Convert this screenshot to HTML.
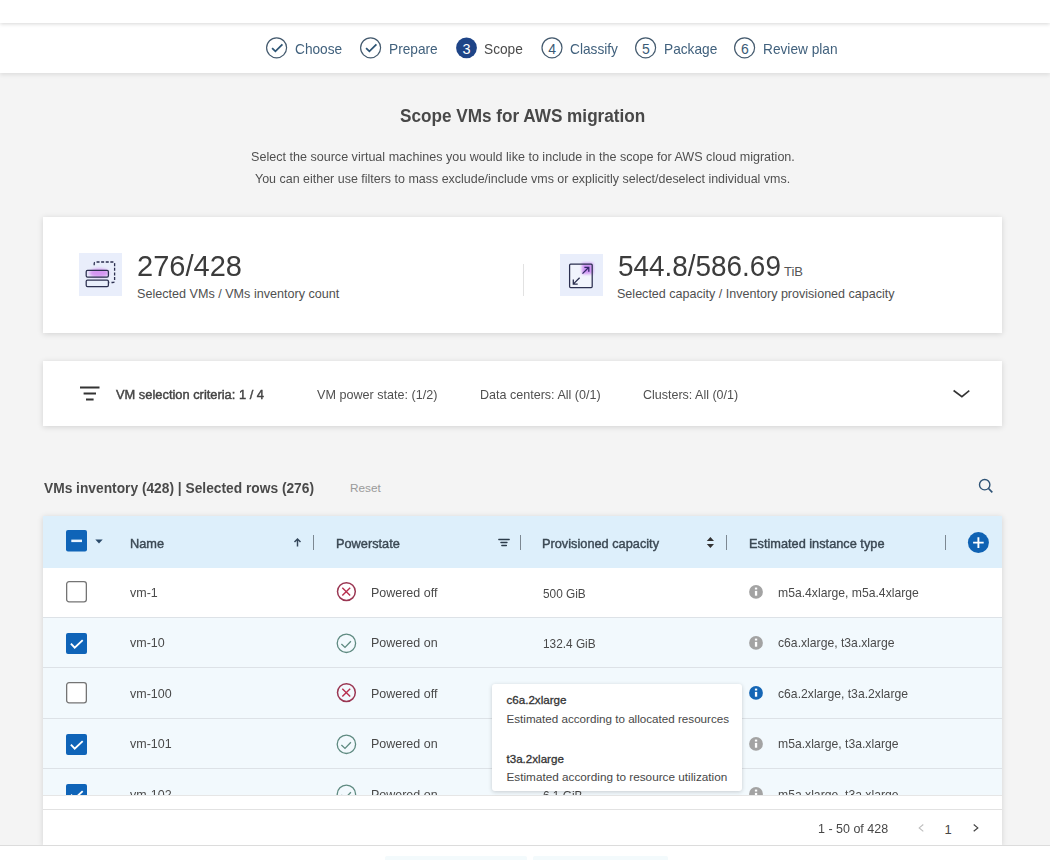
<!DOCTYPE html>
<html><head><meta charset="utf-8">
<style>
*{box-sizing:border-box;margin:0;padding:0}
html,body{width:1050px;height:860px;overflow:hidden;background:#f4f4f4;font-family:"Liberation Sans",sans-serif;color:#333}
.t{position:absolute;white-space:nowrap;line-height:1}
svg{position:absolute;overflow:visible}
#topbar{position:absolute;left:0;top:0;width:1050px;height:23px;background:#fff;box-shadow:0 1px 4px rgba(0,0,0,.16);z-index:2}
#stepper{position:absolute;left:0;top:23px;width:1050px;height:50px;background:#fff;box-shadow:0 2px 4px rgba(0,0,0,.09)}
.step{color:#41617d;font-size:14.2px;top:42.2px;transform:scaleX(.965);transform-origin:0 0}
.card{position:absolute;left:43px;width:959px;background:#fff;box-shadow:0 1px 6px rgba(0,0,0,.14)}
.sb{-webkit-text-stroke:0.3px currentColor}
.hd{font-size:12.9px;color:#3b4853;top:537.6px;-webkit-text-stroke:0.4px #3b4853;transform:scaleX(.99);transform-origin:0 0}
.row{position:absolute;left:43px;width:959px;height:50px;border-bottom:1px solid #dde3e8}
.cell{font-size:13px;color:#4a4a4a;top:17.6px;transform:scaleX(.96);transform-origin:0 0}
.cap{font-size:12.4px;top:19.7px;transform:scaleX(.955)}
.inst{font-size:12.7px;top:18.9px;transform:scaleX(.96)}
</style></head><body>
<div id="topbar"></div>
<div id="stepper"></div>

<!-- Stepper -->
<svg style="left:266px;top:37px" width="22" height="22" viewBox="0 0 22 22"><circle cx="10.6" cy="10.8" r="10" fill="none" stroke="#445a6e" stroke-width="1.2"/><path d="M6.1 11.2 L9.4 14.3 L16.4 7.4" fill="none" stroke="#2e5575" stroke-width="1.8"/></svg>
<div class="t step" style="left:295px">Choose</div>
<svg style="left:360px;top:37px" width="22" height="22" viewBox="0 0 22 22"><circle cx="10.6" cy="10.8" r="10" fill="none" stroke="#445a6e" stroke-width="1.2"/><path d="M6.1 11.2 L9.4 14.3 L16.4 7.4" fill="none" stroke="#2e5575" stroke-width="1.8"/></svg>
<div class="t step" style="left:389px">Prepare</div>
<svg style="left:456px;top:37px" width="22" height="22" viewBox="0 0 22 22"><circle cx="10.5" cy="10.8" r="10.4" fill="#1e4487"/></svg>
<div class="t" style="left:462.6px;top:41.6px;font-size:14.5px;color:#fff">3</div>
<div class="t step" style="left:484px;color:#4a4a4a">Scope</div>
<svg style="left:541px;top:37px" width="22" height="22" viewBox="0 0 22 22"><circle cx="11" cy="10.8" r="10" fill="none" stroke="#445a6e" stroke-width="1.2"/></svg>
<div class="t" style="left:548.2px;top:42.2px;font-size:14px;color:#3a5a75">4</div>
<div class="t step" style="left:570px">Classify</div>
<svg style="left:635px;top:37px" width="22" height="22" viewBox="0 0 22 22"><circle cx="10.6" cy="10.8" r="10" fill="none" stroke="#445a6e" stroke-width="1.2"/></svg>
<div class="t" style="left:642px;top:42.2px;font-size:14px;color:#3a5a75">5</div>
<div class="t step" style="left:664px">Package</div>
<svg style="left:734px;top:37px" width="22" height="22" viewBox="0 0 22 22"><circle cx="10.6" cy="10.8" r="10" fill="none" stroke="#445a6e" stroke-width="1.2"/></svg>
<div class="t" style="left:741px;top:42.2px;font-size:14px;color:#3a5a75">6</div>
<div class="t step" style="left:763px">Review plan</div>

<!-- Title -->
<div class="t" style="left:399.5px;top:107.3px;font-size:18px;font-weight:700;color:#484848;transform:scaleX(.953);transform-origin:0 0">Scope VMs for AWS migration</div>
<div class="t" style="left:250.5px;top:150.2px;font-size:13px;color:#505050;transform:scaleX(.967);transform-origin:0 0">Select the source virtual machines you would like to include in the scope for AWS cloud migration.</div>
<div class="t" style="left:254.5px;top:172px;font-size:13px;color:#505050;transform:scaleX(.959);transform-origin:0 0">You can either use filters to mass exclude/include vms or explicitly select/deselect individual vms.</div>

<!-- Summary card -->
<div class="card" style="top:217px;height:116px"></div>
<div style="position:absolute;left:79px;top:253px;width:43px;height:43px;background:#e9eefb"></div>
<svg style="left:79px;top:253px" width="43" height="43" viewBox="0 0 43 43">
 <defs><filter id="bl" x="-50%" y="-50%" width="200%" height="200%"><feGaussianBlur stdDeviation="1.6"/></filter></defs>
 <ellipse cx="20" cy="20" rx="10" ry="4.2" fill="#d595f2" filter="url(#bl)"/>
 <path d="M15.2 12.2 V10.6 Q15.2 9 16.8 9 H34 Q35.6 9 35.6 10.6 V27.9 Q35.6 29.5 34 29.5 H30.6" fill="none" stroke="#2b2f4f" stroke-width="1.3" stroke-dasharray="3 1.6"/>
 <rect x="7.2" y="17.4" width="22.2" height="6.6" rx="1.3" fill="none" stroke="#2b2f4f" stroke-width="1.25"/>
 <rect x="7.2" y="27" width="22.2" height="6.6" rx="1.3" fill="#e8eefa" stroke="#2b2f4f" stroke-width="1.25"/>
</svg>
<div class="t" style="left:137px;top:251px;font-size:30px;color:#3c3c3c;transform:scaleX(.968);transform-origin:0 0">276/428</div>
<div class="t" style="left:137px;top:287.9px;font-size:12.6px;color:#505050">Selected VMs / VMs inventory count</div>
<div style="position:absolute;left:523px;top:264px;width:1px;height:32px;background:#e2e2e2"></div>
<div style="position:absolute;left:560px;top:254px;width:43px;height:42px;background:#e9eefb"></div>
<svg style="left:560px;top:254px" width="43" height="42" viewBox="0 0 43 42">
 <defs><filter id="bl2" x="-50%" y="-50%" width="200%" height="200%"><feGaussianBlur stdDeviation="1.5"/></filter></defs>
 <rect x="10" y="10.5" width="22" height="22.5" fill="#f1f4fc"/>
 <rect x="22" y="9" width="11" height="11" fill="#cc8cf3" opacity=".95" filter="url(#bl2)"/>
 <rect x="9.6" y="10.2" width="22.6" height="23.4" rx="1" fill="none" stroke="#2b2f4f" stroke-width="1.25"/>
 <path d="M22.5 19.6 L28.6 13.5 M24.4 13.3 H28.8 V17.7" fill="none" stroke="#33286a" stroke-width="1.3"/>
 <path d="M19.6 23.8 L13.5 29.9 M13.3 25.6 V30.1 H17.7" fill="none" stroke="#2b2f4f" stroke-width="1.3"/>
</svg>
<div class="t" style="left:617.5px;top:251px;font-size:30px;color:#3c3c3c;transform:scaleX(.93);transform-origin:0 0">544.8/586.69</div>
<div class="t" style="left:784px;top:264.6px;font-size:13px;color:#555">TiB</div>
<div class="t" style="left:617px;top:287.9px;font-size:12.55px;color:#505050">Selected capacity / Inventory provisioned capacity</div>

<!-- Filter card -->
<div class="card" style="top:361px;height:65px"></div>
<svg style="left:80px;top:386px" width="20" height="15" viewBox="0 0 20 15"><path d="M0 1.5 H19.5 M3.6 7.5 H16 M6 13.5 H13.6" stroke="#333" stroke-width="2"/></svg>
<div class="t" style="left:115.5px;top:387.6px;font-size:13.2px;color:#444;-webkit-text-stroke:0.45px #444;transform:scaleX(.975);transform-origin:0 0">VM selection criteria: 1 / 4</div>
<div class="t" style="left:317px;top:387.6px;font-size:13.1px;color:#505050;transform:scaleX(.962);transform-origin:0 0">VM power state: (1/2)</div>
<div class="t" style="left:480px;top:387.6px;font-size:13.1px;color:#505050;transform:scaleX(.958);transform-origin:0 0">Data centers: All (0/1)</div>
<div class="t" style="left:643px;top:387.6px;font-size:13.1px;color:#505050;transform:scaleX(.954);transform-origin:0 0">Clusters: All (0/1)</div>
<svg style="left:952px;top:388px" width="19" height="11" viewBox="0 0 19 11"><path d="M1.6 2.5 L9.9 8.7 L17.3 2.7" fill="none" stroke="#333" stroke-width="1.6"/></svg>

<!-- Table toolbar -->
<div class="t" style="left:43.5px;top:480.8px;font-size:14px;font-weight:700;color:#4a4a4a;transform:scaleX(.983);transform-origin:0 0">VMs inventory (428) | Selected rows (276)</div>
<div class="t" style="left:350px;top:482.6px;font-size:11.8px;color:#9a9a9a">Reset</div>
<svg style="left:976px;top:477px" width="20" height="20" viewBox="0 0 20 20"><circle cx="8.7" cy="7.7" r="5.2" fill="none" stroke="#2d5275" stroke-width="1.4"/><path d="M12.5 11.5 L16.3 15.3" stroke="#2d5275" stroke-width="1.7"/></svg>

<!-- Table -->
<div style="position:absolute;left:43px;top:516px;width:959px;height:329px;background:#fff;box-shadow:0 1px 6px rgba(0,0,0,.14)"></div>
<div style="position:absolute;left:43px;top:516px;width:959px;height:52px;background:#ddeffb"></div>


<!-- Table header -->
<svg style="left:66px;top:530px" width="21" height="22" viewBox="0 0 21 22"><rect x="0" y="0" width="21" height="21.6" rx="2" fill="#0f64b8"/><rect x="5.3" y="9.6" width="10.7" height="2.5" fill="#e8f4ff"/></svg>
<svg style="left:95px;top:539px" width="8" height="5" viewBox="0 0 8 5"><path d="M0.3 0.6 H7.7 L4 4.4 Z" fill="#2a4a6a"/></svg>
<div class="t hd sb" style="left:130px">Name</div>
<svg style="left:293px;top:537px" width="9" height="11" viewBox="0 0 9 11"><path d="M4.5 2.3 V9.4 M1.5 5 L4.5 2 L7.5 5" fill="none" stroke="#34465a" stroke-width="1.45"/></svg>
<div style="position:absolute;left:313px;top:535px;width:1px;height:15px;background:#7c8892"></div>
<div class="t hd sb" style="left:336px">Powerstate</div>
<svg style="left:498px;top:539px" width="12" height="8" viewBox="0 0 12 8"><path d="M0.8 0.5 H11.2 M2.9 3.5 H9 M3.8 6.5 H8.4" stroke="#2b3b4a" stroke-width="1.3" stroke-linecap="round"/></svg>
<div style="position:absolute;left:520px;top:535px;width:1px;height:15px;background:#7c8892"></div>
<div class="t hd sb" style="left:542px">Provisioned capacity</div>
<svg style="left:706px;top:536px" width="9" height="13" viewBox="0 0 9 13"><path d="M0.8 5 L4.4 1 L8 5 Z M0.8 8 L4.4 12 L8 8 Z" fill="#333"/></svg>
<div style="position:absolute;left:726px;top:535px;width:1px;height:15px;background:#7c8892"></div>
<div class="t hd sb" style="left:749px">Estimated instance type</div>
<div style="position:absolute;left:945px;top:535px;width:1px;height:15px;background:#7c8892"></div>
<svg style="left:967px;top:532px" width="22" height="22" viewBox="0 0 22 22"><circle cx="11.4" cy="10.6" r="10.5" fill="#0f62b3"/><path d="M11.4 5.3 V15.9 M6.1 10.6 H16.7" stroke="#fff" stroke-width="1.9"/></svg>

<!-- Rows -->
<div style="position:absolute;left:0;top:568px;width:1050px;height:227px;overflow:hidden">
<div style="position:absolute;left:43px;top:0px;width:959px;height:50px;background:#fff"></div>
<div style="position:absolute;left:43px;top:50px;width:959px;height:50px;background:#f2f9fd"></div>
<div style="position:absolute;left:43px;top:100px;width:959px;height:51px;background:#f2f9fd"></div>
<div style="position:absolute;left:43px;top:151px;width:959px;height:50px;background:#f2f9fd"></div>
<div style="position:absolute;left:43px;top:201px;width:959px;height:31px;background:#f2f9fd"></div>
<div style="position:absolute;left:43px;top:49px;width:959px;height:1px;background:#dde2e7"></div>
<div style="position:absolute;left:43px;top:99px;width:959px;height:1px;background:#dde2e7"></div>
<div style="position:absolute;left:43px;top:150px;width:959px;height:1px;background:#dde2e7"></div>
<div style="position:absolute;left:43px;top:200px;width:959px;height:1px;background:#dde2e7"></div>
<div style="position:absolute;left:43px;top:0.0px;width:959px;height:50px">
<svg style="left:23px;top:13px" width="21" height="21" viewBox="0 0 21 21"><rect x="0.65" y="0.65" width="19.7" height="20.2" rx="2.4" fill="#fff" stroke="#747474" stroke-width="1.3"/></svg>
<div class="t cell" style="left:87px">vm-1</div>
<svg style="left:293px;top:14px" width="21" height="21" viewBox="0 0 21 21"><circle cx="10.4" cy="9.6" r="8.9" fill="none" stroke="#9a3652" stroke-width="1.5"/><path d="M6.3 5.7 L14.2 13.6 M14.2 5.7 L6.3 13.6" fill="none" stroke="#b8304f" stroke-width="1.4"/></svg>
<div class="t cell" style="left:328px">Powered off</div>
<div class="t cell cap" style="left:500px">500 GiB</div>
<svg style="left:705px;top:17px" width="15" height="15" viewBox="0 0 15 15"><circle cx="8" cy="6.9" r="6.9" fill="#a3a3a3"/><rect x="6.9" y="2.6" width="2.3" height="1.9" fill="#fff"/><rect x="6.9" y="5.9" width="2.3" height="4.8" fill="#fff"/></svg>
<div class="t cell inst" style="left:735px">m5a.4xlarge, m5a.4xlarge</div>
</div>
<div style="position:absolute;left:43px;top:50.5px;width:959px;height:50px">
<svg style="left:23px;top:14px" width="21" height="21" viewBox="0 0 21 21"><rect x="0" y="0" width="21" height="21" rx="2" fill="#0f64b8"/><path d="M4.9 10.7 L8.7 14.6 L16.7 7.1" fill="none" stroke="#fff" stroke-width="1.9"/></svg>
<div class="t cell" style="left:87px">vm-10</div>
<svg style="left:293px;top:14px" width="21" height="21" viewBox="0 0 21 21"><circle cx="10.4" cy="10.3" r="9.2" fill="none" stroke="#5e8a80" stroke-width="1.3"/><path d="M5.4 11 L9 14.4 L14.9 8.2" fill="none" stroke="#5e8a80" stroke-width="1.3"/></svg>
<div class="t cell" style="left:328px">Powered on</div>
<div class="t cell cap" style="left:500px">132.4 GiB</div>
<svg style="left:705px;top:17px" width="15" height="15" viewBox="0 0 15 15"><circle cx="8" cy="6.9" r="6.9" fill="#a3a3a3"/><rect x="6.9" y="2.6" width="2.3" height="1.9" fill="#fff"/><rect x="6.9" y="5.9" width="2.3" height="4.8" fill="#fff"/></svg>
<div class="t cell inst" style="left:735px">c6a.xlarge, t3a.xlarge</div>
</div>
<div style="position:absolute;left:43px;top:101.0px;width:959px;height:50px">
<svg style="left:23px;top:13px" width="21" height="21" viewBox="0 0 21 21"><rect x="0.65" y="0.65" width="19.7" height="20.2" rx="2.4" fill="#fff" stroke="#747474" stroke-width="1.3"/></svg>
<div class="t cell" style="left:87px">vm-100</div>
<svg style="left:293px;top:14px" width="21" height="21" viewBox="0 0 21 21"><circle cx="10.4" cy="9.6" r="8.9" fill="none" stroke="#9a3652" stroke-width="1.5"/><path d="M6.3 5.7 L14.2 13.6 M14.2 5.7 L6.3 13.6" fill="none" stroke="#b8304f" stroke-width="1.4"/></svg>
<div class="t cell" style="left:328px">Powered off</div>
<div class="t cell cap" style="left:500px">61.2 GiB</div>
<svg style="left:705px;top:17px" width="15" height="15" viewBox="0 0 15 15"><circle cx="8" cy="6.9" r="6.9" fill="#1566b5"/><rect x="6.9" y="2.6" width="2.3" height="1.9" fill="#fff"/><rect x="6.9" y="5.9" width="2.3" height="4.8" fill="#fff"/></svg>
<div class="t cell inst" style="left:735px">c6a.2xlarge, t3a.2xlarge</div>
</div>
<div style="position:absolute;left:43px;top:151.5px;width:959px;height:50px">
<svg style="left:23px;top:14px" width="21" height="21" viewBox="0 0 21 21"><rect x="0" y="0" width="21" height="21" rx="2" fill="#0f64b8"/><path d="M4.9 10.7 L8.7 14.6 L16.7 7.1" fill="none" stroke="#fff" stroke-width="1.9"/></svg>
<div class="t cell" style="left:87px">vm-101</div>
<svg style="left:293px;top:14px" width="21" height="21" viewBox="0 0 21 21"><circle cx="10.4" cy="10.3" r="9.2" fill="none" stroke="#5e8a80" stroke-width="1.3"/><path d="M5.4 11 L9 14.4 L14.9 8.2" fill="none" stroke="#5e8a80" stroke-width="1.3"/></svg>
<div class="t cell" style="left:328px">Powered on</div>
<div class="t cell cap" style="left:500px">24.8 GiB</div>
<svg style="left:705px;top:17px" width="15" height="15" viewBox="0 0 15 15"><circle cx="8" cy="6.9" r="6.9" fill="#a3a3a3"/><rect x="6.9" y="2.6" width="2.3" height="1.9" fill="#fff"/><rect x="6.9" y="5.9" width="2.3" height="4.8" fill="#fff"/></svg>
<div class="t cell inst" style="left:735px">m5a.xlarge, t3a.xlarge</div>
</div>
<div style="position:absolute;left:43px;top:202.0px;width:959px;height:50px">
<svg style="left:23px;top:14px" width="21" height="21" viewBox="0 0 21 21"><rect x="0" y="0" width="21" height="21" rx="2" fill="#0f64b8"/><path d="M4.9 10.7 L8.7 14.6 L16.7 7.1" fill="none" stroke="#fff" stroke-width="1.9"/></svg>
<div class="t cell" style="left:87px">vm-102</div>
<svg style="left:293px;top:14px" width="21" height="21" viewBox="0 0 21 21"><circle cx="10.4" cy="10.3" r="9.2" fill="none" stroke="#5e8a80" stroke-width="1.3"/><path d="M5.4 11 L9 14.4 L14.9 8.2" fill="none" stroke="#5e8a80" stroke-width="1.3"/></svg>
<div class="t cell" style="left:328px">Powered on</div>
<div class="t cell cap" style="left:500px">6.1 GiB</div>
<svg style="left:705px;top:17px" width="15" height="15" viewBox="0 0 15 15"><circle cx="8" cy="6.9" r="6.9" fill="#a3a3a3"/><rect x="6.9" y="2.6" width="2.3" height="1.9" fill="#fff"/><rect x="6.9" y="5.9" width="2.3" height="4.8" fill="#fff"/></svg>
<div class="t cell inst" style="left:735px">m5a.xlarge, t3a.xlarge</div>
</div>
</div>
<div style="position:absolute;left:43px;top:795px;width:959px;height:1px;background:#e6e6e6"></div>
<div style="position:absolute;left:43px;top:809px;width:959px;height:1px;background:#e2e2e2"></div>
<div class="t" style="left:818px;top:822.2px;font-size:13px;color:#474747;transform:scaleX(.96);transform-origin:0 0">1 - 50 of 428</div>
<svg style="left:917px;top:823px" width="8" height="10" viewBox="0 0 8 10"><path d="M6.3 1.5 L2.2 4.9 L6.3 8.3" fill="none" stroke="#bdbdbd" stroke-width="1.1"/></svg>
<div class="t" style="left:944.6px;top:822.6px;font-size:13px;color:#474747">1</div>
<svg style="left:972px;top:823px" width="8" height="10" viewBox="0 0 8 10"><path d="M1.7 1.5 L5.8 4.9 L1.7 8.3" fill="none" stroke="#444" stroke-width="1.2"/></svg>

<!-- Bottom bar -->
<div style="position:absolute;left:0;top:845px;width:1050px;height:15px;background:#fff;border-top:1px solid #dcdcdc"></div>
<div style="position:absolute;left:385px;top:856px;width:142px;height:10px;background:#f3fafc;border-radius:2px"></div>
<div style="position:absolute;left:533px;top:856px;width:135px;height:10px;background:#f3fafc;border-radius:2px"></div>

<!-- Tooltip -->
<div style="position:absolute;left:492px;top:684px;width:250px;height:107px;background:#fff;border-radius:3px;box-shadow:0 1px 4px rgba(0,0,0,.18)"></div>
<div class="t sb" style="left:506.5px;top:694.4px;font-size:11.6px;color:#333">c6a.2xlarge</div>
<div class="t" style="left:506.5px;top:713px;font-size:11.65px;color:#474747">Estimated according to allocated resources</div>
<div class="t sb" style="left:506.5px;top:753px;font-size:11.6px;color:#333">t3a.2xlarge</div>
<div class="t" style="left:506.5px;top:771px;font-size:11.75px;color:#474747">Estimated according to resource utilization</div>

</body></html>
